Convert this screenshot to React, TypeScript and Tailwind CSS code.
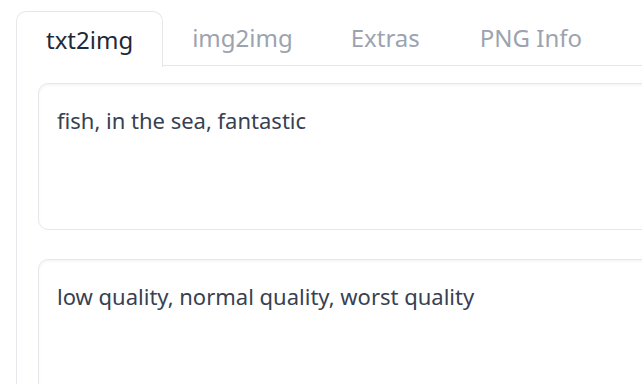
import React from 'react';

const tabs = ['txt2img', 'img2img', 'Extras', 'PNG Info', 'Checkpoint Merger'];

const PromptBox: React.FC<{ text: string; className?: string }> = ({ text, className }) => (
  <div
    className={`rounded-[10px] border border-[#e5e7eb] bg-white shadow-[inset_0_2px_3px_rgba(0,0,0,0.04)] px-[18px] pt-[21px] ${className ?? ''}`}
  >
    <div className="text-[22px] leading-[30px] text-[#374151]">{text}</div>
  </div>
);

export default function App() {
  return (
    <div
      className="w-[642px] h-[384px] overflow-hidden bg-white pl-4 pt-[11px]"
      style={{ fontFamily: '"Noto Sans", "Open Sans", sans-serif' }}
    >
      <div className="flex items-end w-[1000px]">
        {tabs.map((t, i) =>
          i === 0 ? (
            <div
              key={t}
              className="h-[56px] px-[29px] flex items-center rounded-t-[10px] border border-b-0 border-[#e5e7eb] bg-white text-[24px] text-[#1f2937] relative -mb-px z-10"
            >
              {t}
            </div>
          ) : (
            <div
              key={t}
              className={`h-[55px] px-[29px] flex items-center border-b border-[#e5e7eb] text-[24px] text-[#9ca3af] ${
                i === 3 ? 'pl-[31px]' : ''
              } ${i === 4 ? 'pl-[32px]' : ''}`}
            >
              {t}
            </div>
          )
        )}
        <div className="flex-1 border-b border-[#e5e7eb]" />
      </div>
      <div className="border-l border-[#e5e7eb] pl-[21px] pt-[17px] w-[700px] flex flex-col gap-[29px]">
        <PromptBox text="fish, in the sea, fantastic" className="h-[147px]" />
        <PromptBox text="low quality, normal quality, worst quality" className="h-[147px]" />
      </div>
    </div>
  );
}
